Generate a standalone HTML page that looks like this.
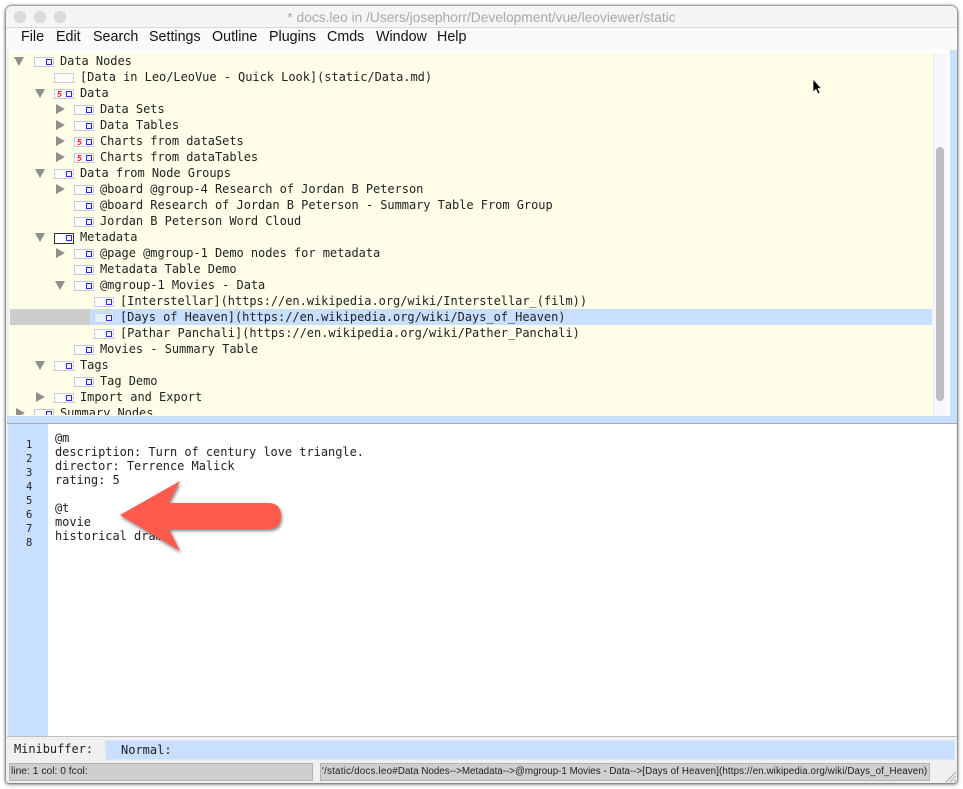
<!DOCTYPE html>
<html><head><meta charset="utf-8">
<style>
html,body{margin:0;padding:0;width:963px;height:789px;overflow:hidden;background:#fff}
div,svg{position:absolute}
#win{left:6px;top:6px;width:951px;height:777px;background:#f0f0f0;border-radius:6px 6px 3px 3px;box-shadow:0 0 2px 1px rgba(0,0,0,.5),0 2px 5px rgba(0,0,0,.25);overflow:hidden}
#title{left:6px;top:6px;width:951px;height:22px;background:#f5f5f5;border-bottom:1px solid #d8d8d8;box-sizing:border-box;border-radius:6px 6px 0 0;text-align:center;font:13.75px/23px "Liberation Sans",sans-serif;color:#a9a9a9;white-space:nowrap}
.dot{width:12px;height:12px;border-radius:50%;background:#dcdcdc;top:11px;box-shadow:inset 0 0 0 .5px #d0d0d0}
#menu{left:6px;top:28px;width:951px;height:22px;background:#fafafa}
.m{top:28px;font:14.3px/18px "Liberation Sans",sans-serif;color:#111;white-space:nowrap}
#treebg{left:9px;top:53px;width:924px;height:363px;background:#ffffe9}
#topstrip{left:9px;top:50px;width:941px;height:3px;background:#fff}
#sb{left:933px;top:53px;width:14px;height:363px;background:#f7f7f7;border-left:1px solid #ececec;box-sizing:border-box}
#thumb{left:936px;top:147px;width:8px;height:254px;border-radius:4px;background:#bdbdbd}
#rstrip{left:950px;top:50px;width:7px;height:372px;background:#c8dfff}
#whitegap{left:947px;top:50px;width:3px;height:366px;background:#fff}
#split{left:7px;top:416px;width:950px;height:7px;background:#c8dfff;border-bottom:1px solid #a8a8a8}
#tree{left:0;top:50px;width:932px;height:365px;overflow:hidden}
.t{font:12px/16px "DejaVu Sans Mono",monospace;color:#222;white-space:pre;height:16px;letter-spacing:-.04px}
.ic{width:20px;height:10px;background:#fff;border:1px solid #c9c9de;box-sizing:border-box}
.ic.d{border:1px solid #333;height:11px}
.ic.s{background:#e6eefc;border-color:#c9d4e8}
.ic i{position:absolute;right:1px;top:1px;width:6px;height:6px;border:1px solid #2a2aee;box-sizing:border-box;background:#eef0ff}
.ic svg{left:1px;top:0}
.ad{width:0;height:0;border-left:5.5px solid transparent;border-right:5.5px solid transparent;border-top:9px solid #8f8f8f}
.ar{width:0;height:0;border-top:5.5px solid transparent;border-bottom:5.5px solid transparent;border-left:9px solid #8f8f8f}
#gut{left:8px;top:424px;width:40px;height:312px;background:#c8dfff}
#ed{left:48px;top:424px;width:908px;height:312px;background:#fff}
.ln{font:10.5px/14px "DejaVu Sans Mono",monospace;color:#222;left:26px;white-space:pre}
.e{font:12px/14px "DejaVu Sans Mono",monospace;color:#222;left:55px;white-space:pre;letter-spacing:-.04px}
#bline{left:7px;top:736px;width:950px;height:1px;background:#bcbcbc}
#mbl{left:14px;top:741px;font:12px/16px "DejaVu Sans Mono",monospace;color:#222;white-space:pre;letter-spacing:-.04px}
#mbi{left:105px;top:740px;width:850px;height:20px;background:#c8dfff;border:1px solid #dbe6f5;box-sizing:border-box;font:12px/18px "DejaVu Sans Mono",monospace;color:#222;padding-left:15px}
.st{top:763px;height:18px;background:#cfcfcf;border:1px solid #b4b4b4;box-sizing:border-box;font:10.3px/16px "Liberation Sans",sans-serif;color:#222;white-space:nowrap;overflow:hidden}
</style></head><body>
<div id="win"></div>
<div id="title">* docs.leo in /Users/josephorr/Development/vue/leoviewer/static</div>
<div class="dot" style="left:14px"></div><div class="dot" style="left:34px"></div><div class="dot" style="left:54px"></div>
<div id="menu"></div>
<div class="m" style="left:21px">File</div><div class="m" style="left:56px">Edit</div><div class="m" style="left:93px">Search</div><div class="m" style="left:149px">Settings</div><div class="m" style="left:212px">Outline</div><div class="m" style="left:269px">Plugins</div><div class="m" style="left:327px">Cmds</div><div class="m" style="left:376px">Window</div><div class="m" style="left:437px">Help</div>
<div id="topstrip"></div><div id="treebg"></div><div id="sb"></div><div id="thumb"></div><div id="whitegap"></div><div id="rstrip"></div>
<div style="left:10px;top:309px;width:80px;height:16px;background:#cdcdcd"></div>
<div style="left:90px;top:309px;width:842px;height:16px;background:#c8dfff"></div>
<div id="tree">
<div class="ad" style="left:14px;top:7px"></div><div class="ic" style="left:34px;top:7px"><i></i></div><div class="t" style="left:60px;top:3px">Data Nodes</div>
<div class="ic" style="left:54px;top:23px"></div><div class="t" style="left:80px;top:19px">[Data in Leo/LeoVue - Quick Look](static/Data.md)</div>
<div class="ad" style="left:35px;top:39px"></div><div class="ic" style="left:54px;top:39px"><svg width="7" height="8" viewBox="0 0 7 8"><path d="M5.5 1.6H2.6L2.2 3.8C4 3 5.2 3.6 5 5C4.8 6.4 3 6.6 1.4 6" fill="none" stroke="#ee2020" stroke-width="1.1"/></svg><i></i></div><div class="t" style="left:80px;top:35px">Data</div>
<div class="ar" style="left:56px;top:54px"></div><div class="ic" style="left:74px;top:55px"><i></i></div><div class="t" style="left:100px;top:51px">Data Sets</div>
<div class="ar" style="left:56px;top:70px"></div><div class="ic" style="left:74px;top:71px"><i></i></div><div class="t" style="left:100px;top:67px">Data Tables</div>
<div class="ar" style="left:56px;top:86px"></div><div class="ic" style="left:74px;top:87px"><svg width="7" height="8" viewBox="0 0 7 8"><path d="M5.5 1.6H2.6L2.2 3.8C4 3 5.2 3.6 5 5C4.8 6.4 3 6.6 1.4 6" fill="none" stroke="#ee2020" stroke-width="1.1"/></svg><i></i></div><div class="t" style="left:100px;top:83px">Charts from dataSets</div>
<div class="ar" style="left:56px;top:102px"></div><div class="ic" style="left:74px;top:103px"><svg width="7" height="8" viewBox="0 0 7 8"><path d="M5.5 1.6H2.6L2.2 3.8C4 3 5.2 3.6 5 5C4.8 6.4 3 6.6 1.4 6" fill="none" stroke="#ee2020" stroke-width="1.1"/></svg><i></i></div><div class="t" style="left:100px;top:99px">Charts from dataTables</div>
<div class="ad" style="left:35px;top:119px"></div><div class="ic" style="left:54px;top:119px"><i></i></div><div class="t" style="left:80px;top:115px">Data from Node Groups</div>
<div class="ar" style="left:56px;top:134px"></div><div class="ic" style="left:74px;top:135px"><i></i></div><div class="t" style="left:100px;top:131px">@board @group-4 Research of Jordan B Peterson</div>
<div class="ic" style="left:74px;top:151px"><i></i></div><div class="t" style="left:100px;top:147px">@board Research of Jordan B Peterson - Summary Table From Group</div>
<div class="ic" style="left:74px;top:167px"><i></i></div><div class="t" style="left:100px;top:163px">Jordan B Peterson Word Cloud</div>
<div class="ad" style="left:35px;top:183px"></div><div class="ic d" style="left:54px;top:183px"><i></i></div><div class="t" style="left:80px;top:179px">Metadata</div>
<div class="ar" style="left:56px;top:198px"></div><div class="ic" style="left:74px;top:199px"><i></i></div><div class="t" style="left:100px;top:195px">@page @mgroup-1 Demo nodes for metadata</div>
<div class="ic" style="left:74px;top:215px"><i></i></div><div class="t" style="left:100px;top:211px">Metadata Table Demo</div>
<div class="ad" style="left:55px;top:231px"></div><div class="ic" style="left:74px;top:231px"><i></i></div><div class="t" style="left:100px;top:227px">@mgroup-1 Movies - Data</div>
<div class="ic" style="left:94px;top:247px"><i></i></div><div class="t" style="left:120px;top:243px">[Interstellar](https://en.wikipedia.org/wiki/Interstellar_(film))</div>
<div class="ic s" style="left:94px;top:263px"><i></i></div><div class="t" style="left:120px;top:259px">[Days of Heaven](https://en.wikipedia.org/wiki/Days_of_Heaven)</div>
<div class="ic" style="left:94px;top:279px"><i></i></div><div class="t" style="left:120px;top:275px">[Pathar Panchali](https://en.wikipedia.org/wiki/Pather_Panchali)</div>
<div class="ic" style="left:74px;top:295px"><i></i></div><div class="t" style="left:100px;top:291px">Movies - Summary Table</div>
<div class="ad" style="left:35px;top:311px"></div><div class="ic" style="left:54px;top:311px"><i></i></div><div class="t" style="left:80px;top:307px">Tags</div>
<div class="ic" style="left:74px;top:327px"><i></i></div><div class="t" style="left:100px;top:323px">Tag Demo</div>
<div class="ar" style="left:36px;top:342px"></div><div class="ic" style="left:54px;top:343px"><i></i></div><div class="t" style="left:80px;top:339px">Import and Export</div>
<div class="ar" style="left:16px;top:358px"></div><div class="ic" style="left:34px;top:359px"><i></i></div><div class="t" style="left:60px;top:355px">Summary Nodes</div>
</div>
<div id="split"></div>
<div id="gut"></div><div id="ed"></div>
<div class="ln" style="top:438px">1</div><div class="ln" style="top:452px">2</div><div class="ln" style="top:466px">3</div><div class="ln" style="top:480px">4</div><div class="ln" style="top:494px">5</div><div class="ln" style="top:508px">6</div><div class="ln" style="top:522px">7</div><div class="ln" style="top:536px">8</div>
<div class="e" style="top:431px">@m</div>
<div class="e" style="top:445px">description: Turn of century love triangle.</div>
<div class="e" style="top:459px">director: Terrence Malick</div>
<div class="e" style="top:473px">rating: 5</div>
<div class="e" style="top:501px">@t</div>
<div class="e" style="top:515px">movie</div>
<div class="e" style="top:529px">historical drama</div>
<svg style="left:0;top:0" width="963" height="789" viewBox="0 0 963 789">
<defs><filter id="sh" x="-20%" y="-20%" width="140%" height="140%"><feDropShadow dx="1" dy="2" stdDeviation="1.6" flood-color="#000" flood-opacity=".5"/></filter></defs>
<path d="M120 515 L180 481 L169 503 L268 503 Q281 503 281 516 Q281 529 268 529 L169 529 L180 551 Z" fill="#ff5a4d" filter="url(#sh)"/>
<path d="M813 79 L813 92 L816 89.5 L818 94 L820 93 L818 88.5 L821.5 88.5 Z" fill="#000" stroke="#fff" stroke-width=".7"/>
</svg>
<div id="bline"></div>
<div id="mbl">Minibuffer:</div>
<div id="mbi">Normal:</div>
<div class="st" style="left:9px;width:304px;padding-left:1px">line: 1 col: 0 fcol:</div>
<div class="st" style="left:320px;width:610px;padding-left:1px;font-size:9.8px"><span style="letter-spacing:.21px">'/static/docs.leo#</span>Data Nodes--&gt;Metadata--&gt;@mgroup-1 Movies - Data--&gt;<span style="letter-spacing:.1px">[Days of Heaven](https://en.wikipedia.org/wiki/Days_of_Heaven)</span></div>
<svg style="left:945px;top:770px" width="12" height="13" viewBox="0 0 12 13"><path d="M1 12 L11 2 M5 12 L11 6 M9 12 L11 10" stroke="#a8a8a8" stroke-width="1"/></svg>
</body></html>
